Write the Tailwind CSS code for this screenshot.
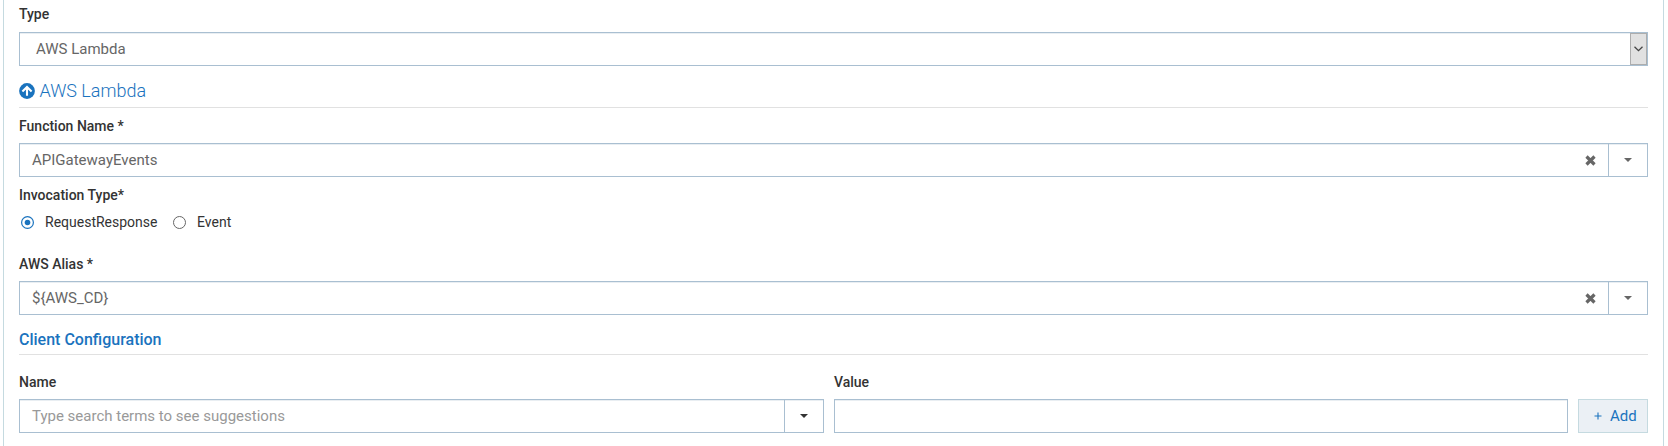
<!DOCTYPE html>
<html lang="en">
<head>
<meta charset="utf-8">
<title>AWS Lambda</title>
<script src="https://cdn.jsdelivr.net/npm/@tailwindcss/browser@4"></script>
</head>
<body class="bg-white font-['Roboto',sans-serif] text-sm text-[#333]">
<main class="ml-[3px] mr-[4px] h-[446px] overflow-hidden border-x border-[#c5dae0] px-[15px]">
  <div class="flex h-8 items-start pt-1 font-medium leading-5">Type</div>
  <div class="flex h-[34px] border border-[#a9bfd1] shadow-[inset_0_1px_0_#e9eef2]">
    <span class="flex-1 pl-4 text-[15px] leading-[32px] text-[#666]">AWS Lambda</span>
    <span class="flex w-[17px] items-center justify-center border border-[#adadad] bg-[#e1e1e1]">
      <svg class="-ml-px" width="9" height="6" viewBox="0 0 9 6" fill="none" stroke="#444" stroke-width="1.3"><path d="M.5 .7 4.5 4.7 8.5 .7"/></svg>
    </span>
  </div>
  <h2 class="flex h-[42px] items-start gap-[4.5px] border-b border-[#e1e1e1] pt-[13px] text-lg font-light leading-6 text-[#1a73be]">
    <svg class="mt-[4px]" width="16" height="16" viewBox="0 0 16 16"><circle cx="8" cy="8" r="7.9" fill="#1a73be"/><path d="M3.4 8.6 8 4 12.6 8.6M8 4.8V12.8" fill="none" stroke="#fff" stroke-width="2.1"/></svg>
    <span>AWS Lambda</span>
  </h2>
  <div class="h-[35px] pt-[8px] font-medium leading-5">Function Name *</div>
  <div class="flex h-[34px] items-center border border-[#a9bfd1] shadow-[inset_0_1px_0_#e9eef2]">
    <span class="flex-1 pl-3 text-[15px] leading-[32px] text-[#666]">APIGatewayEvents</span>
    <svg class="mr-[12px] mt-px" width="11" height="11" viewBox="0 0 11 11"><path d="M1.5 1.5 9.5 9.5M9.5 1.5 1.5 9.5" stroke="#666" stroke-width="3.2"/></svg>
    <span class="flex h-full w-[39px] items-center justify-center border-l border-[#a9bfd1]"><svg width="8" height="4" viewBox="0 0 8 4"><path d="M0 0H8L4 4Z" fill="#666"/></svg></span>
  </div>
  <div class="h-[31px] pt-[8px] font-medium leading-5">Invocation Type*</div>
  <div class="flex h-[30px] items-start pt-[8px]">
    <svg class="ml-[2px]" width="13" height="13" viewBox="0 0 13 13"><circle cx="6.5" cy="6.5" r="5.9" fill="#fff" stroke="#1a73be" stroke-width="1.2"/><circle cx="6.5" cy="6.5" r="2.8" fill="#1a73be"/></svg>
    <span class="-mt-[4px] ml-[11px] w-[117px]">RequestResponse</span>
    <svg class="ml-[11px]" width="13" height="13" viewBox="0 0 13 13"><circle cx="6.5" cy="6.5" r="6" fill="#fff" stroke="#666"/></svg>
    <span class="-mt-[4px] ml-[11px]">Event</span>
  </div>
  <div class="h-[43px] pt-[16px] font-medium leading-5">AWS Alias *</div>
  <div class="flex h-[34px] items-center border border-[#a9bfd1] shadow-[inset_0_1px_0_#e9eef2]">
    <span class="flex-1 pl-3 text-[15px] leading-[32px] text-[#666]">${AWS_CD}</span>
    <svg class="mr-[12px] mt-px" width="11" height="11" viewBox="0 0 11 11"><path d="M1.5 1.5 9.5 9.5M9.5 1.5 1.5 9.5" stroke="#666" stroke-width="3.2"/></svg>
    <span class="flex h-full w-[39px] items-center justify-center border-l border-[#a9bfd1]"><svg width="8" height="4" viewBox="0 0 8 4"><path d="M0 0H8L4 4Z" fill="#666"/></svg></span>
  </div>
  <h3 class="h-10 border-b border-[#e1e1e1] pt-[13px] text-base font-medium leading-6 text-[#1a73be]">Client Configuration</h3>
  <div class="flex gap-[10px]">
    <div class="w-[805px]">
      <div class="h-11 pt-[17px] font-medium leading-5">Name</div>
      <div class="flex h-[34px] items-center border border-[#a9bfd1] shadow-[inset_0_1px_0_#e9eef2]">
        <span class="flex-1 pl-3 text-[15px] leading-[32px] text-[#999]">Type search terms to see suggestions</span>
        <span class="flex h-full w-[39px] items-center justify-center border-l border-[#a9bfd1]"><svg width="8" height="4" viewBox="0 0 8 4"><path d="M0 0H8L4 4Z" fill="#333"/></svg></span>
      </div>
    </div>
    <div class="flex-1">
      <div class="h-11 pt-[17px] font-medium leading-5">Value</div>
      <div class="h-[34px] border border-[#a9bfd1] shadow-[inset_0_1px_0_#e9eef2]"></div>
    </div>
    <button class="mt-11 flex h-[34px] w-[70px] items-center border border-[#c5dae0] bg-[#ebf0f5] pl-[15px] text-[#1a73be]">
      <svg width="8" height="8" viewBox="0 0 8 8" stroke="#1a73be" stroke-width="1.1"><path d="M4 .5V7.5M.5 4H7.5"/></svg>
      <span class="ml-[8px] pt-[2px] text-[15px]">Add</span>
    </button>
  </div>
</main>
</body>
</html>
